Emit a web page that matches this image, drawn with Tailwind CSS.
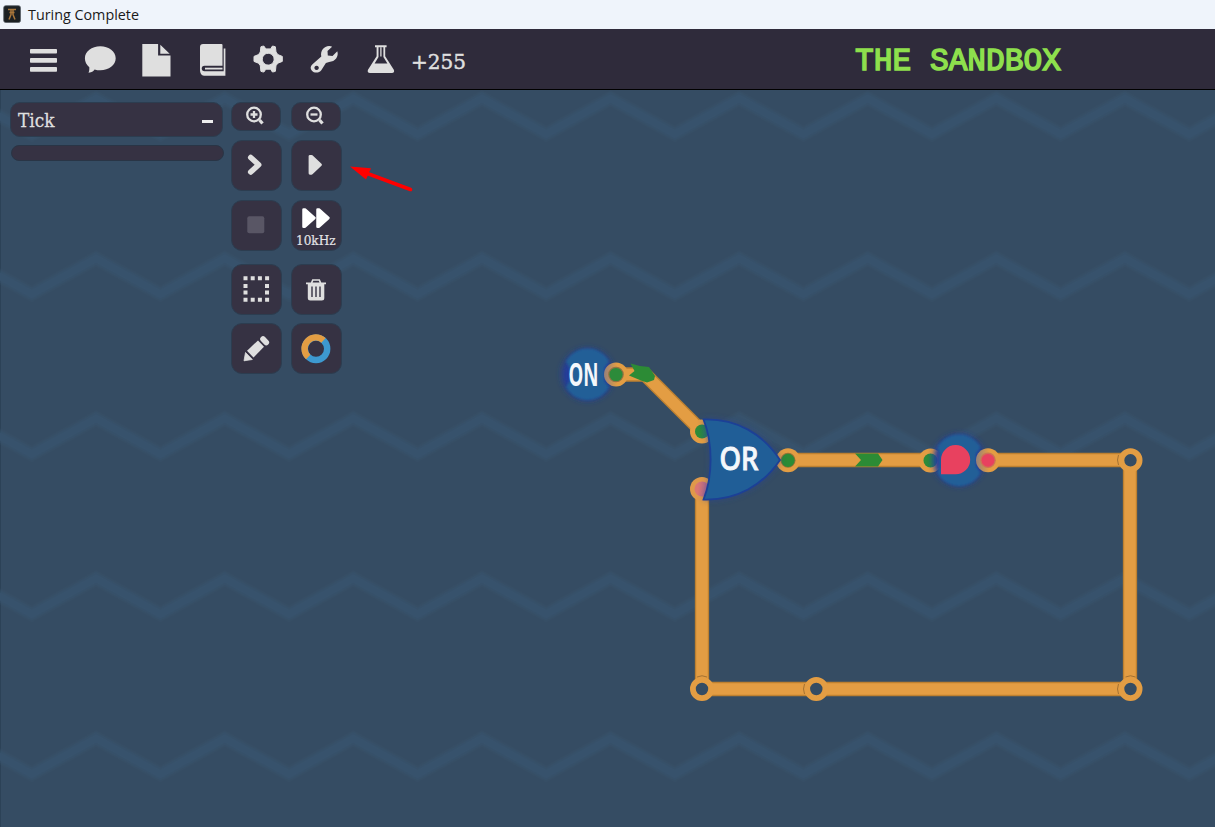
<!DOCTYPE html>
<html lang="en">
<head>
<meta charset="utf-8">
<title>Turing Complete</title>
<script src="https://cdn.jsdelivr.net/npm/@tailwindcss/browser@4"></script>
</head>
<body class="w-[1215px] h-[827px] overflow-hidden flex flex-col bg-[#354c63]">
<header class="h-[29px] shrink-0 bg-[#eff4fb] flex items-center pl-[3px]">
  <svg class="w-[18px] h-[18px] shrink-0 -mt-px" viewBox="0 0 18 18"><rect x=".7" y=".7" width="16.8" height="16.8" rx="2" fill="#1b2023" stroke="#596067" stroke-width=".8"/><path d="M5 4.500h8M8 5v4.500l-2 5M10 5v4.500l2 5M6.500 7.500h5" stroke="#a8763a" stroke-width="1.500" fill="none"/></svg>
  <svg class="ml-[7px] block w-[120px] h-[29px] overflow-visible text-[14.4px] font-['Open_Sans','Noto_Sans',sans-serif]"><text x="0" y="20" textLength="111" lengthAdjust="spacingAndGlyphs" fill="#1a1a1a">Turing Complete</text></svg>
</header>
<nav class="h-[61px] shrink-0 bg-[#2f2b3b] border-b border-black flex pl-[15px] text-[#dfdfdf]">
  <svg class="w-14 h-[60px] shrink-0" viewBox="0 0 56 60" fill="currentColor"><rect x="15" y="20" width="27" height="4.600" rx=".8"/><rect x="15" y="29" width="27" height="4.800" rx=".8"/><rect x="15" y="38" width="27" height="4.800" rx=".8"/></svg>
  <svg class="w-14 h-[60px] shrink-0" viewBox="0 0 56 60" fill="currentColor"><path d="M29.300 17.300c8.600 0 15.400 5.200 15.400 12s-6.800 12-15.400 12c-2 0-4-.3-5.700-.9-.8 1.200-2.300 2.900-6.100 3.300.8-1.700.9-3.200.8-5.400-2.800-2.300-4.400-5.500-4.400-9 0-6.800 6.800-12 15.400-12z"/></svg>
  <svg class="w-14 h-[60px] shrink-0" viewBox="0 0 56 60" fill="currentColor"><path d="M15.300 15h15.800v11.500h12.400v21h-28.200zM33.300 15.800l9.400 9h-9.400z"/></svg>
  <svg class="w-14 h-[60px] shrink-0" viewBox="0 0 56 60" fill="currentColor"><path d="M20 15h18.500q1 0 1 1v20.700H21.500q-2.800.3-2.800 2.800t2.800 2.800h19.200V19.500h1.700v27.300H21q-4-.6-4-5.500V18q0-3 3-3z"/><path d="M22 38.700H39.500v1.800H22z"/></svg>
  <svg class="w-14 h-[60px] shrink-0" viewBox="0 0 56 60" fill="currentColor"><path fill-rule="evenodd" stroke="currentColor" stroke-width="1" stroke-linejoin="round" d="M21.900 17.800q1.600-.7 3-.7l1.900 2.800h4.800l1.800-2.800q1.500.1 3 .7l.6 5.200 1.800 2.600 4.500 1.800v5l-4.500 1.800-1.800 2.500-.6 5.600q-1.500.6-3 .7l-1.800-2.800h-4.800l-1.900 2.800q-1.400 0-3-.7l-.6-5.600-1.800-2.500-4.500-1.800v-5l4.500-1.800 1.800-2.600zM29.200 24.300a5.900 5.900 0 1 0 .01 0z"/></svg>
  <svg class="w-14 h-[60px] shrink-0" viewBox="0 0 56 60"><path fill="currentColor" fill-rule="evenodd" d="M17.500 35.200l8.800-7.800c-1.200-5.300 2.500-10.400 7.800-10.400q2 0 3 .8l-4.600 4.100.3 4.500 4.700.7 4.800-4.800c1.700 5-2 10.600-8.200 10.600l-3.200 1.200-4.600 7.200c-2 2.800-7.200 3.100-9.400.4-2-2.300-1.500-4.700.6-6.500zM21.600 36.700a2.200 2.200 0 1 0 .01 0z"/></svg>
  <svg class="w-14 h-[60px] shrink-0" viewBox="0 0 56 60"><path fill="currentColor" fill-rule="evenodd" d="M24 16.200h11.600v2h-1.400v9l8.600 13.500q1.300 3.100-2 3.300H19q-3.200-.2-2-3.300l8.600-13.500v-9H24zM27.500 18.200v9.800l-3.900 6.500h12.800l-4-6.500v-9.800z"/><path d="M29.900 18.200v9.300" stroke="currentColor" stroke-width="1.300"/></svg>
  <svg class="w-[70px] h-[60px] shrink-0 overflow-visible font-['DejaVu_Serif',serif]"><text x="4" y="39.700" font-size="20.700" textLength="55" lengthAdjust="spacingAndGlyphs" fill="#dfdfdf" stroke="#dfdfdf" stroke-width=".5">+255</text></svg>
  <svg class="ml-[378px] w-[220px] h-[60px] shrink-0 overflow-visible font-['Liberation_Mono',monospace]"><text x="0" y="41.300" font-size="31.800" textLength="206" lengthAdjust="spacingAndGlyphs" fill="#8ee04d" stroke="#8ee04d" stroke-width="1.500">THE SANDBOX</text></svg>
</nav>
<main class="relative flex-1 border-l border-[#2c4257]">
  <svg class="absolute top-0 -left-px w-[1215px] h-[737px]" viewBox="0 90 1215 737">
    <defs>
      <pattern id="zig" x="-32.500" y="80" width="128.600" height="160" patternUnits="userSpaceOnUse"><g fill="none" stroke="#38526d"><path d="M-64.300 54L0 18.500L64.300 54L128.600 18.500L192.900 54" stroke-width="14" opacity=".25"/><path d="M-64.300 54L0 18.500L64.300 54L128.600 18.500L192.900 54" stroke-width="11" opacity=".4"/><path d="M-64.300 54L0 18.500L64.300 54L128.600 18.500L192.900 54" stroke-width="7" opacity=".9"/></g></pattern>
      <filter id="glow" x="-40%" y="-40%" width="180%" height="180%"><feGaussianBlur stdDeviation="3.200"/></filter>
      <filter id="soft" x="-20%" y="-20%" width="140%" height="140%"><feGaussianBlur stdDeviation="1"/></filter>
      <linearGradient id="fadeR"><stop offset="0" stop-color="#95807a"/><stop offset=".55" stop-color="#e39d43"/></linearGradient>
      <linearGradient id="pinkFade"><stop offset=".2" stop-color="#dc7772"/><stop offset="1" stop-color="#a8648e"/></linearGradient>
      <linearGradient id="greenFade"><stop offset=".3" stop-color="#2c8b3a"/><stop offset="1" stop-color="#28706b"/></linearGradient>
      <linearGradient id="fadeL"><stop offset=".6" stop-color="#e39d43"/><stop offset="1" stop-color="#8f7b78"/></linearGradient>
    </defs>
    <rect x="0" y="90" width="1215" height="737" fill="url(#zig)"/>

    <g fill="none" stroke-linejoin="miter">
      <path stroke="#bd8030" stroke-width="14.300" d="M616 374.500H645L702 431.500M788 460H930M988 460H1130V689H702V489"/>
      <path stroke="#e39d43" stroke-width="11.600" d="M616 374.500H645L702 431.500M788 460H930M988 460H1130V689H702V489"/>
    </g>
    <path d="M630.500 363.500L640 366L649 367L655 376L654 380L647 382.500L641 380.500L629 375.500L634.500 371z" fill="#2c8b35"/>
    <path d="M855 453.500H878L882.500 460L878 466.500H855L861 460z" fill="#2c8b35"/>

    <g fill="#354c63" stroke="#e39d43" stroke-width="5.800">
      <circle cx="702" cy="689" r="9.100"/><circle cx="816.300" cy="689" r="9.100"/><circle cx="1130.500" cy="689" r="9.100"/><circle cx="1130.500" cy="460.300" r="9.100"/>
    </g>
    <g fill="none" stroke="#9c6c30" stroke-width=".9"><path d="M697 677q5-2.500 10 0M804.500 684q-2 5 0 10M1118.500 455q-2 5 0 10M1118.500 684q-2 5 0 10M1125.500 677q5-2.500 10 0"/></g>

    <circle cx="702" cy="431.500" r="12" fill="url(#fadeL)"/><circle cx="702" cy="431.500" r="7" fill="url(#greenFade)"/>
    <circle cx="702" cy="489" r="12" fill="#e0994a"/><circle cx="702" cy="489" r="7.500" fill="url(#pinkFade)"/>
    <circle cx="930.500" cy="460.500" r="12" fill="url(#fadeL)"/><circle cx="930.500" cy="460.500" r="7" fill="url(#greenFade)"/>

    <circle cx="788" cy="460.300" r="12" fill="#e39d43"/><circle cx="788" cy="460.300" r="7.500" fill="#927238"/><circle cx="788" cy="460.300" r="6.600" fill="#2c8b35"/>
    <g>
      <path d="M703 419C737 418 764 433 781 460C764 486 737 501 703 500C713 476 713 443 703 419z" fill="#25439b" opacity=".6" filter="url(#glow)"/>
      <path d="M703.500 419.500C737 418.500 763 434 780 460C763 485 737 500.500 703.500 499.500C713 476 713 443 703.500 419.500z" fill="#205e97" stroke="#1c4096" stroke-width="1.800"/>
      <text x="719.500" y="469.500" font-size="32" font-weight="500" font-family="Noto Sans, sans-serif" fill="#f4f7fb" stroke="#f4f7fb" stroke-width=".9" textLength="39" lengthAdjust="spacingAndGlyphs">OR</text>
    </g>
    <g>
      <circle cx="587.500" cy="374.500" r="25.500" fill="#223a9e" filter="url(#glow)"/>
      <path d="M566 361.500A24.300 24.300 0 0 1 609 361.500L604.500 368V381L609 387A24.300 24.300 0 0 1 566 387L569.500 381V368z" fill="#205e97" filter="url(#soft)"/>
      <text x="568.500" y="385.700" font-size="32" font-weight="700" font-family="Noto Sans, sans-serif" fill="#f4f7fb" textLength="30" lengthAdjust="spacingAndGlyphs">ON</text>
    </g>
    <g>
      <circle cx="959" cy="460" r="25.500" fill="#223a9e" filter="url(#glow)"/>
      <path d="M937.500 447.500A24.300 24.300 0 0 1 980.500 447.500L976 454V466L980.500 473A24.300 24.300 0 0 1 937.500 473L939.500 466V454z" fill="#205e97" filter="url(#soft)"/>
      <path d="M941 474.300V459.700A14.600 14.600 0 1 1 955.600 474.300z" fill="#e8415f"/>
    </g>
    <circle cx="616" cy="374.500" r="12" fill="url(#fadeR)"/><circle cx="616" cy="374.500" r="7.800" fill="#927243"/><circle cx="616" cy="374.500" r="6.600" fill="#2c8b3a"/>
    <circle cx="988" cy="460.300" r="12" fill="url(#fadeR)"/><circle cx="988" cy="460.300" r="7.800" fill="#cc7354"/><circle cx="988" cy="460.300" r="6.400" fill="#e8415f"/>

    <path d="M410.500 189.500L366 173" stroke="#f00" stroke-width="3.600" stroke-linecap="round"/><path d="M350 166.500L371 168.300L366 179.500z" fill="#f00"/>
  </svg>

  <div class="relative flex pl-[9px] pt-3 text-[#dfdfdf]">
    <section class="w-[214px] mr-[7px]">
      <div class="w-[213px] h-[35px] rounded-[10px] bg-[#363243] border border-[#2c3d50] flex items-center justify-between pl-[6px] pr-[9px] pt-px">
        <svg class="w-11 h-[30px] overflow-visible font-['DejaVu_Serif',serif]"><text x="1" y="22" font-size="18.500" textLength="36.500" lengthAdjust="spacingAndGlyphs" fill="#dfdfdf" stroke="#dfdfdf" stroke-width=".3">Tick</text></svg>
        <span class="w-[11px] h-[3px] mt-[3px] bg-[#eee]"></span>
      </div>
      <div class="ml-px mt-2 w-[213px] h-4 rounded-full bg-[#363243] border border-[#293546]"></div>
    </section>
    <section class="grid grid-cols-[51px_51px] gap-x-[9px]">
      <div class="h-[29px] w-[50px] rounded-[10px] bg-[#363243] border border-[#2c3d50]"><svg class="w-12 h-[27px]" viewBox="0 0 48 27" fill="none" stroke="currentColor" stroke-width="2.300"><circle cx="22" cy="11.500" r="6.800"/><path d="M27.500 17l3 3.500" stroke-width="3.200"/><path d="M18.500 11.500h7M22 8v7"/></svg></div>
      <div class="h-[29px] w-[50px] rounded-[10px] bg-[#363243] border border-[#2c3d50]"><svg class="w-12 h-[27px]" viewBox="0 0 48 27" fill="none" stroke="currentColor" stroke-width="2.300"><circle cx="22" cy="11.500" r="6.800"/><path d="M27.500 17l3 3.500" stroke-width="3.200"/><path d="M18.500 11.500h7"/></svg></div>
      <div class="mt-[9px] h-[51px] rounded-[11px] bg-[#363243] border border-[#2c3d50]"><svg class="w-[49px] h-[49px]" viewBox="0 0 49 49"><path d="M18.700 16.500l8 7.200-8 7.300" fill="none" stroke="currentColor" stroke-width="5.500" stroke-linejoin="round" stroke-linecap="round"/></svg></div>
      <div class="mt-[9px] h-[51px] rounded-[11px] bg-[#363243] border border-[#2c3d50]"><svg class="w-[49px] h-[49px]" viewBox="0 0 49 49"><path d="M18 15.300h1.500l9 8.500-9 8.500h-1.500z" fill="currentColor" stroke="currentColor" stroke-width="2.800" stroke-linejoin="round"/></svg></div>
      <div class="mt-[9px] h-[51px] rounded-[11px] bg-[#363243] border border-[#2c3d50]"><svg class="w-[49px] h-[49px]" viewBox="0 0 49 49"><rect x="15.300" y="15.300" width="17" height="17" rx="2" fill="#595665"/></svg></div>
      <div class="mt-[9px] h-[51px] rounded-[11px] bg-[#363243] border border-[#2c3d50]"><svg class="w-[49px] h-[49px]" viewBox="0 0 49 49"><path d="M11.500 8.500h1.500l9.500 8.500-9.500 8.700h-1.500zM25.500 8.500h1.500l9.500 8.500-9.500 8.700h-1.500z" fill="white" stroke="white" stroke-width="2.500" stroke-linejoin="round"/><text x="4" y="43.700" font-size="12.500" font-family="DejaVu Serif, serif" textLength="39.500" lengthAdjust="spacingAndGlyphs" fill="#e2e2e5" stroke="#e2e2e5" stroke-width=".2">10kHz</text></svg></div>
      <div class="mt-[13px] h-[51px] rounded-[11px] bg-[#363243] border border-[#2c3d50]"><svg class="w-[49px] h-[49px]" viewBox="0 0 49 49" stroke="currentColor" stroke-width="4"><path d="M11.500 13.300h26M11.500 34.800h26" stroke-dasharray="4 3.200"/><path d="M13.500 19v4M13.500 25.500v4M35 19v4M35 25.500v4"/></svg></div>
      <div class="mt-[13px] h-[51px] rounded-[11px] bg-[#363243] border border-[#2c3d50]"><svg class="w-[49px] h-[49px]" viewBox="0 0 49 49"><path d="M14 18.300h20M19.500 18l1.300-3h6.500l1.300 3" fill="none" stroke="currentColor" stroke-width="1.700"/><path d="M15.800 19h16.500v14q0 2.500-2.500 2.500H18.300q-2.500 0-2.500-2.500z" fill="currentColor"/><path d="M20 21.500v10.500M24 21.500v10.500M28 21.500v10.500" stroke="#363243" stroke-width="1.400"/></svg></div>
      <div class="mt-2 h-[51px] rounded-[11px] bg-[#363243] border border-[#2c3d50]"><svg class="w-[49px] h-[49px]" viewBox="0 0 49 49" fill="currentColor"><path d="M12 36.800l1.500-8.300 6.800 7z" stroke="currentColor" stroke-width=".8" stroke-linejoin="round"/><path d="M15 26.700L26 16.500l6 6.200L21.500 33.500z"/><path d="M31 15l3.300 3.500" stroke="currentColor" stroke-width="5.600" stroke-linecap="round"/></svg></div>
      <div class="mt-2 h-[51px] rounded-[11px] bg-[#363243] border border-[#2c3d50]"><svg class="w-[49px] h-[49px]" viewBox="0 0 49 49" fill="none" stroke-width="6.400"><circle cx="24" cy="24.800" r="11.200" stroke="#3d99d0"/><path d="M16.200 33A11.200 11.200 0 0 1 31.500 16.400" stroke="#e39d43"/></svg></div>
    </section>
  </div>
</main>
</body>
</html>
